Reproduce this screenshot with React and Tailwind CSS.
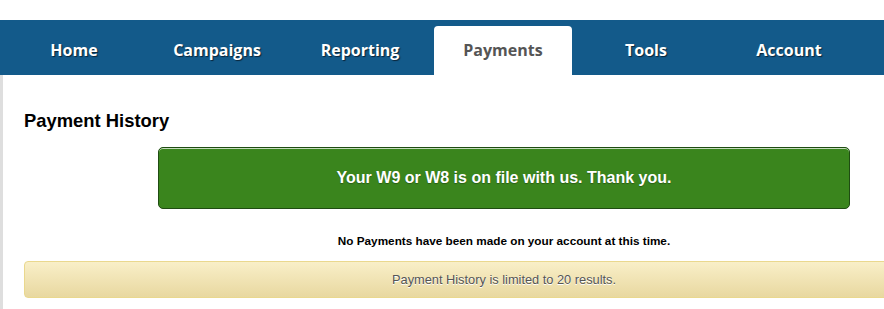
import React from 'react';

const tabs = ['Home', 'Campaigns', 'Reporting', 'Payments', 'Tools', 'Account'];

const App = () => {
    const active = 'Payments';
    return (
        <div className="w-[884px] h-[309px] overflow-hidden bg-white font-['Liberation_Sans',Arial,sans-serif]">
            <div className="h-[20px] bg-white"></div>
            {/* main nav */}
            <div className="h-[55px] bg-[#135a8a] flex items-end gap-[5px] pl-[5px]">
                {tabs.map((tab) => (
                    tab === active ? (
                        <div key={tab} className="w-[138px] h-[49px] shrink-0 bg-white rounded-t-[4px] flex items-center justify-center pb-[1px] font-['Open_Sans',sans-serif] font-bold text-[16px] text-[#555]">
                            {tab}
                        </div>
                    ) : (
                        <div key={tab} className="w-[138px] h-[49px] shrink-0 flex items-center justify-center pb-[1px] font-['Open_Sans',sans-serif] font-bold text-[16px] text-white [text-shadow:1px_1px_1px_#0a2438]">
                            {tab}
                        </div>
                    )
                ))}
            </div>
            <div className="border-l-[3px] border-[#dedede] h-[234px] pl-[21px]">
                <div className="w-[960px]">
                    <h2 className="pt-[35px] text-[18.4px] font-bold text-black leading-[22px]">Payment History</h2>
                    <div className="mt-[15px] w-[692px] h-[62px] mx-auto rounded-[5px] border border-[#1f4c12] bg-[#3a851d] shadow-[inset_0_1px_0_rgba(255,255,255,0.7)] flex items-center justify-center">
                        <span className="text-white font-bold text-[16px] [text-shadow:0_1px_1px_rgba(0,0,0,0.3)]">Your W9 or W8 is on file with us. Thank you.</span>
                    </div>
                    <p className="mt-[25px] text-center text-[11.75px] font-bold text-black leading-[14px]">No Payments have been made on your account at this time.</p>
                    <div className="mt-[13px] h-[37px] rounded-[4px] border border-[#ead88e] bg-gradient-to-b from-[#f9efc8] to-[#e8d8a0] flex items-center justify-center">
                        <span className="text-[12.8px] text-[#555] [text-shadow:0_1px_0_#fff]">Payment History is limited to 20 results.</span>
                    </div>
                </div>
            </div>
        </div>
    );
};

export default App;
